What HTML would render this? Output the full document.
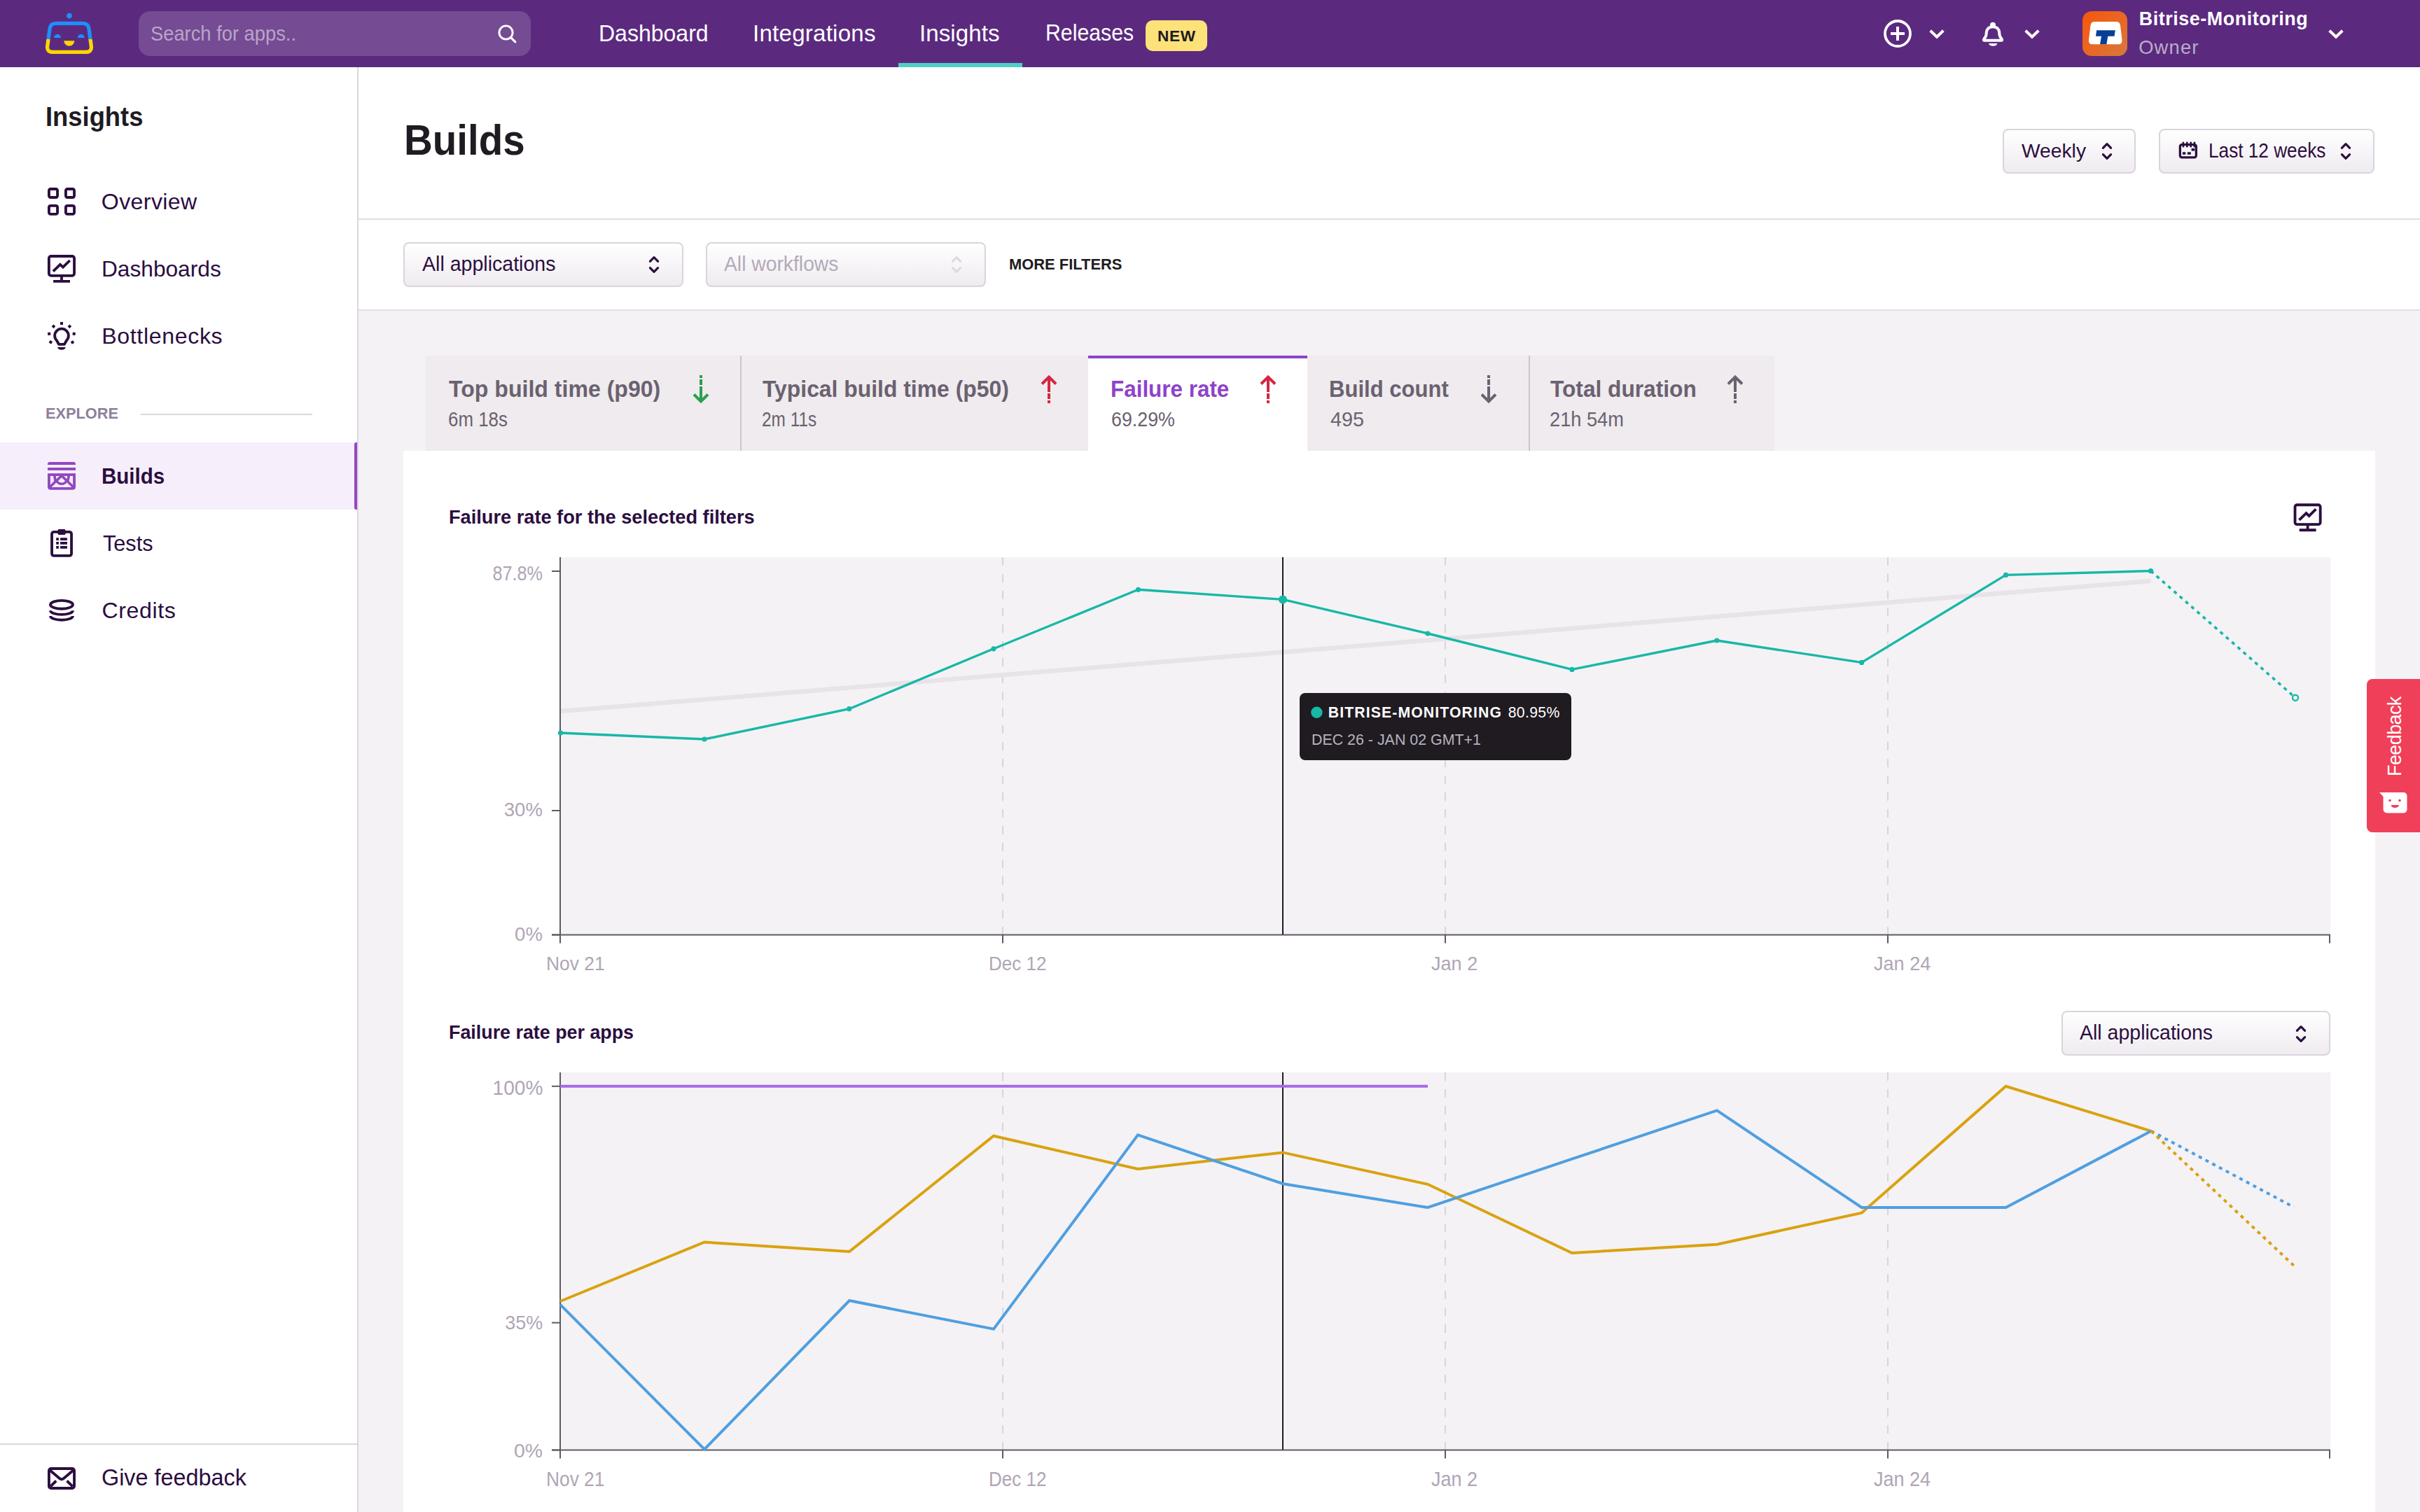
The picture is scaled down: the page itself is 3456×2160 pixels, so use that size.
<!DOCTYPE html>
<html><head><meta charset="utf-8"><title>Builds - Insights</title>
<style>
html,body{margin:0;padding:0;}
body{width:3456px;height:2160px;overflow:hidden;position:relative;background:#f4f2f5;font-family:"Liberation Sans",sans-serif;}
.r{position:absolute;display:block;}
.t{position:absolute;white-space:nowrap;}
@media (max-width:2400px){body{zoom:0.5;}}
</style></head><body>
<div class="r" style="left:0px;top:0px;width:3456px;height:96px;background:#5b2a7f;"></div>
<div class="r" style="left:0px;top:96px;width:510px;height:2064px;background:#fff;"></div>
<div class="r" style="left:510px;top:96px;width:2px;height:2064px;background:#dcd6df;"></div>
<div class="r" style="left:512px;top:96px;width:2944px;height:216px;background:#fff;"></div>
<div class="r" style="left:512px;top:312px;width:2944px;height:2px;background:#e2dde4;"></div>
<div class="r" style="left:512px;top:314px;width:2944px;height:126px;background:#fff;"></div>
<div class="r" style="left:512px;top:314px;width:2944px;height:128px;background:#fff;"></div>
<div class="r" style="left:512px;top:442px;width:2944px;height:2px;background:#e2dde4;"></div>
<div class="r" style="left:198px;top:16px;width:560px;height:64px;background:#754b93;border-radius:16px;"></div>
<svg class="r" style="left:700px;top:30px;" width="50" height="40" viewBox="700 30 50 40"><circle cx="722.5" cy="46.5" r="9.6" fill="none" stroke="#fff" stroke-width="2.9"/><path d="M729.8 53.8 L735.8 59.8" stroke="#fff" stroke-width="3.2" stroke-linecap="round"/></svg>
<div class="r" style="left:1283px;top:90px;width:177px;height:6px;background:#4fd0c4;"></div>
<div class="r" style="left:1636px;top:29px;width:88px;height:44px;background:#fde27a;border-radius:10px;"></div>
<svg class="r" style="left:56px;top:10px;" width="90" height="76" viewBox="56 10 90 76"><defs><clipPath id="ctop"><rect x="50" y="0" width="100" height="56"/></clipPath><clipPath id="cbot"><rect x="50" y="56" width="100" height="40"/></clipPath></defs><circle cx="99" cy="22.6" r="3.8" fill="#1e8fff"/><path id="lb" d="M80 33.3 L118 33.3 Q126 33.3 127 41 L130.3 66 Q131.5 74.4 122 74.4 L76 74.4 Q66.5 74.4 67.7 66 L71 41 Q72 33.3 80 33.3 Z" fill="none" stroke="#1e8fff" stroke-width="5.3" clip-path="url(#ctop)"/><path d="M80 33.3 L118 33.3 Q126 33.3 127 41 L130.3 66 Q131.5 74.4 122 74.4 L76 74.4 Q66.5 74.4 67.7 66 L71 41 Q72 33.3 80 33.3 Z" fill="none" stroke="#ffd600" stroke-width="5.3" clip-path="url(#cbot)"/><path d="M77 54 A5 5 0 0 1 87 54 Z" fill="#1e8fff"/><path d="M110.8 54 A5 5 0 0 1 120.8 54 Z" fill="#1e8fff"/><path d="M91.3 58.2 L106.3 58.2 A7.5 7.5 0 0 1 91.3 58.2 Z" fill="#ffd600"/></svg>
<svg class="r" style="left:2680px;top:20px;" width="240" height="56" viewBox="2680 20 240 56"><circle cx="2710" cy="48" r="18" fill="none" stroke="#fff" stroke-width="3.8"/><path d="M2700 48 H2720 M2710 38 V58" stroke="#fff" stroke-width="4"/><path d="M2756.7 43.7 L2766 52.7 L2775.3 43.7" fill="none" stroke="#fff" stroke-width="4"/><path d="M2892.7 43.7 L2902 52.7 L2911.3 43.7" fill="none" stroke="#fff" stroke-width="4"/><path d="M2846 38.2 C2840 38.2 2837 42 2836.7 47 L2836.5 50 Q2836 52.5 2833.5 55.3 Q2831.8 57.8 2834.5 57.8 L2857.5 57.8 Q2860.2 57.8 2858.5 55.3 Q2856 52.5 2855.5 50 L2855.3 47 C2855 42 2852 38.2 2846 38.2 Z" fill="none" stroke="#fff" stroke-width="4" stroke-linejoin="round"/><circle cx="2846" cy="35.8" r="4" fill="#fff"/><path d="M2840.2 61.9 H2852.3 A6.05 3.9 0 0 1 2840.2 61.9 Z" fill="#fff"/></svg>
<svg class="r" style="left:2966px;top:10px;" width="80" height="76" viewBox="2966 10 80 76"><defs><linearGradient id="ag" x1="0" y1="0" x2="1" y2="1"><stop offset="0" stop-color="#f8560c"/><stop offset="1" stop-color="#d8783c"/></linearGradient></defs><rect x="2974" y="16" width="64" height="64" rx="13" fill="url(#ag)"/><path d="M2991 31 L3022 31 Q3027 31 3028 36 L3030.5 57 Q3031 63.3 3025 63.3 L2988 63.3 Q2982.5 63.3 2983 57 L2985.5 36 Q2986.5 31 2991 31 Z" fill="#fff"/><path d="M2994.2 43.2 L3020.8 43.2 L3019.5 51.7 L3010.3 51.7 L3008.3 63.3 L2999 63.3 L3001 51.7 L2993 51.7 Z" fill="#073f96"/></svg>
<svg class="r" style="left:3315px;top:30px;" width="45" height="36" viewBox="3315 30 45 36"><path d="M3326.7 43.7 L3336 52.7 L3345.3 43.7" fill="none" stroke="#fff" stroke-width="4"/></svg>
<svg class="r" style="left:60px;top:260px;" width="56" height="52" viewBox="60 260 56 52"><rect x="69.95" y="269.95" width="12.1" height="12.05" rx="2.2" fill="none" stroke="#2b0e3f" stroke-width="3.85"/><rect x="69.95" y="293.8" width="12.1" height="12.05" rx="2.2" fill="none" stroke="#2b0e3f" stroke-width="3.85"/><rect x="93.95" y="269.95" width="12.1" height="12.05" rx="2.2" fill="none" stroke="#2b0e3f" stroke-width="3.85"/><rect x="93.95" y="293.8" width="12.1" height="12.05" rx="2.2" fill="none" stroke="#2b0e3f" stroke-width="3.85"/></svg>
<svg class="r" style="left:60px;top:355px;" width="56" height="55" viewBox="60 355 56 55"><rect x="69.9" y="365.95" width="36.15" height="27.9" rx="3" fill="none" stroke="#2b0e3f" stroke-width="3.85"/><path d="M88 394 V401 M76.1 401.95 H100" stroke="#2b0e3f" stroke-width="3.8"/><path d="M75.9 387.6 L85.9 377.8 L90 381.7 L99.8 372" fill="none" stroke="#2b0e3f" stroke-width="3.8"/></svg>
<svg class="r" style="left:60px;top:450px;" width="56" height="55" viewBox="60 450 56 55"><path d="M81.04 486.46 A9.85 9.85 0 1 1 94.96 486.46 L92 491.8 L84 491.8 Z" fill="none" stroke="#2b0e3f" stroke-width="3.85" stroke-linejoin="round"/><path d="M82.2 495.9 H93.7 A5.75 3.9 0 0 1 82.2 495.9 Z" fill="#2b0e3f"/><rect x="86" y="460" width="4" height="4" fill="#2b0e3f" transform="rotate(0 88 462)"/><rect x="74.5" y="464.3" width="4" height="4" fill="#2b0e3f" transform="rotate(45 76.5 466.3)"/><rect x="97.4" y="464.3" width="4" height="4" fill="#2b0e3f" transform="rotate(-45 99.4 466.3)"/><rect x="68.2" y="474.9" width="4" height="4" fill="#2b0e3f" transform="rotate(-10 70.2 476.9)"/><rect x="103.7" y="474.9" width="4" height="4" fill="#2b0e3f" transform="rotate(10 105.7 476.9)"/><rect x="70.4" y="486.7" width="4" height="4" fill="#2b0e3f" transform="rotate(30 72.4 488.7)"/><rect x="101.5" y="487" width="4" height="4" fill="#2b0e3f" transform="rotate(-30 103.5 489)"/></svg>
<div class="r" style="left:201px;top:591px;width:245px;height:2px;background:#dcd6df;"></div>
<div class="r" style="left:0px;top:632px;width:510px;height:95.5px;background:#f6effb;"></div>
<div class="r" style="left:506px;top:632px;width:4px;height:95.5px;background:#9247c2;border-radius:3px 0 0 3px;"></div>
<svg class="r" style="left:60px;top:650px;" width="56" height="60" viewBox="60 650 56 60"><path d="M68 663.9 V663 Q68 660 71 660 L105 660 Q108 660 108 663 V663.9 Z" fill="#9247c2"/><rect x="68" y="668" width="40" height="3.9" fill="#9247c2"/><path d="M69.95 678.05 H106.05 V695.5 Q106.05 697.85 103.5 697.85 H72.5 Q69.95 697.85 69.95 695.5 Z" fill="none" stroke="#9247c2" stroke-width="3.85"/><path d="M71.5 695.5 L88 679.6 L104.5 695.5 M77.8 679.6 L79 687 M98.2 679.6 L97 687" fill="none" stroke="#9247c2" stroke-width="3.6"/><path d="M80.8 686.8 A8 8 0 0 0 95.2 686.8" fill="none" stroke="#9247c2" stroke-width="3.4"/></svg>
<svg class="r" style="left:60px;top:745px;" width="56" height="60" viewBox="60 745 56 60"><rect x="74.05" y="759.85" width="28" height="34.1" rx="3" fill="none" stroke="#2b0e3f" stroke-width="3.85"/><path d="M81.1 760 L83.5 756 H92.6 L95 760 L92.6 763.9 H83.5 Z" fill="#2b0e3f"/><path d="M80.2 770.05 H83.9 M86.1 770.05 H95.9 M80.2 775.95 H83.9 M86.1 775.95 H95.9 M80.2 781.85 H83.9 M86.1 781.85 H95.9" stroke="#2b0e3f" stroke-width="3.7"/></svg>
<svg class="r" style="left:60px;top:845px;" width="56" height="50" viewBox="60 845 56 50"><ellipse cx="88" cy="863.85" rx="16" ry="5.9" fill="none" stroke="#2b0e3f" stroke-width="3.85"/><path d="M72 872.3 A16 5.6 0 0 0 104 872.3 M72 880 A16 5.7 0 0 0 104 880" fill="none" stroke="#2b0e3f" stroke-width="3.85"/></svg>
<div class="r" style="left:0px;top:2062px;width:510px;height:2px;background:#dcd6df;"></div>
<svg class="r" style="left:60px;top:2085px;" width="56" height="50" viewBox="60 2085 56 50"><rect x="69.95" y="2097.95" width="36.1" height="28" rx="3" fill="none" stroke="#2b0e3f" stroke-width="3.85"/><path d="M71.5 2100.5 L85 2112 Q88 2114.5 91 2112 L104.5 2100.5" fill="none" stroke="#2b0e3f" stroke-width="3.85"/><path d="M80.2 2115.5 L72.2 2123.3 M95.6 2115.5 L103.6 2123.3" fill="none" stroke="#2b0e3f" stroke-width="3.85"/></svg>
<div class="r" style="left:2860px;top:184px;width:190px;height:64px;background:linear-gradient(#ffffff,#efebf0);border:2px solid #dad4dc;border-radius:8px;box-sizing:border-box;"></div>
<div class="r" style="left:3083px;top:184px;width:308px;height:64px;background:linear-gradient(#ffffff,#efebf0);border:2px solid #dad4dc;border-radius:8px;box-sizing:border-box;"></div>
<div class="r" style="left:576px;top:346px;width:400px;height:64px;background:linear-gradient(#ffffff,#efebf0);border:2px solid #dad4dc;border-radius:8px;box-sizing:border-box;"></div>
<div class="r" style="left:1008px;top:346px;width:400px;height:64px;background:linear-gradient(#ffffff,#efebf0);border:2px solid #dad4dc;border-radius:8px;box-sizing:border-box;"></div>
<svg class="r" style="left:2997px;top:200px;" width="24" height="32" viewBox="2997 200 24 32"><path d="M3003.4 211.4 L3009 205.7 L3014.6 211.4 M3003.4 220.6 L3009 226.3 L3014.6 220.6" fill="none" stroke="#2b0e3f" stroke-width="3.2" stroke-linecap="round" stroke-linejoin="round"/></svg>
<svg class="r" style="left:3338px;top:200px;" width="24" height="32" viewBox="3338 200 24 32"><path d="M3344.4 211.4 L3350 205.7 L3355.6 211.4 M3344.4 220.6 L3350 226.3 L3355.6 220.6" fill="none" stroke="#2b0e3f" stroke-width="3.2" stroke-linecap="round" stroke-linejoin="round"/></svg>
<svg class="r" style="left:922px;top:362px;" width="24" height="32" viewBox="922 362 24 32"><path d="M928.4 373.4 L934 367.7 L939.6 373.4 M928.4 382.6 L934 388.3 L939.6 382.6" fill="none" stroke="#2b0e3f" stroke-width="3.2" stroke-linecap="round" stroke-linejoin="round"/></svg>
<svg class="r" style="left:1354.4px;top:362px;" width="24.0" height="32" viewBox="1354.4 362 24.0 32"><path d="M1360.8000000000002 373.4 L1366.4 367.7 L1372.0 373.4 M1360.8000000000002 382.6 L1366.4 388.3 L1372.0 382.6" fill="none" stroke="#dfd9e1" stroke-width="3.2" stroke-linecap="round" stroke-linejoin="round"/></svg>
<svg class="r" style="left:3105px;top:196px;" width="40" height="36" viewBox="3105 196 40 36"><rect x="3113.35" y="206.65" width="23" height="18.2" rx="2.5" fill="none" stroke="#2b0e3f" stroke-width="3.3"/><rect x="3116.6" y="202.7" width="2.6" height="7.7" fill="#2b0e3f"/><rect x="3122" y="202.7" width="2.6" height="7.7" fill="#2b0e3f"/><rect x="3127.4" y="202.7" width="2.6" height="7.7" fill="#2b0e3f"/><rect x="3132.6" y="202.7" width="2.6" height="7.7" fill="#2b0e3f"/><rect x="3116.9" y="217.3" width="4.4" height="3.5" fill="#2b0e3f"/><rect x="3123.8" y="217.3" width="5" height="3.5" fill="#2b0e3f"/><rect x="3129.6" y="212" width="4.6" height="3.6" fill="#2b0e3f"/></svg>
<div class="r" style="left:608px;top:508px;width:1926px;height:136px;background:#efebee;"></div>
<div class="r" style="left:1057px;top:508px;width:2px;height:136px;background:#cbc5ce;"></div>
<div class="r" style="left:2182.5px;top:508px;width:2.0px;height:136px;background:#cbc5ce;"></div>
<div class="r" style="left:1554px;top:508px;width:313px;height:136px;background:#fff;"></div>
<div class="r" style="left:1554px;top:508px;width:313px;height:4px;background:#8e44c8;"></div>
<svg class="r" style="left:987px;top:530px;" width="28" height="50" viewBox="987 530 28 50"><path d="M1001 536 V540 M1001 542 V550 M1001 552 V574" stroke="#2ba04d" stroke-width="4"/><path d="M991 563.5 L1001 573.5 L1011 563.5" fill="none" stroke="#2ba04d" stroke-width="4"/></svg>
<svg class="r" style="left:1483.5px;top:530px;" width="28.0" height="50" viewBox="1483.5 530 28.0 50"><path d="M1497.5 538 V560 M1497.5 562 V570 M1497.5 572 V576" stroke="#d5263f" stroke-width="4"/><path d="M1487.5 548.5 L1497.5 538.5 L1507.5 548.5" fill="none" stroke="#d5263f" stroke-width="4"/></svg>
<svg class="r" style="left:1796.5px;top:530px;" width="28.0" height="50" viewBox="1796.5 530 28.0 50"><path d="M1810.5 538 V560 M1810.5 562 V570 M1810.5 572 V576" stroke="#d5263f" stroke-width="4"/><path d="M1800.5 548.5 L1810.5 538.5 L1820.5 548.5" fill="none" stroke="#d5263f" stroke-width="4"/></svg>
<svg class="r" style="left:2111.5px;top:530px;" width="28.0" height="50" viewBox="2111.5 530 28.0 50"><path d="M2125.5 536 V540 M2125.5 542 V550 M2125.5 552 V574" stroke="#6b6170" stroke-width="4"/><path d="M2115.5 563.5 L2125.5 573.5 L2135.5 563.5" fill="none" stroke="#6b6170" stroke-width="4"/></svg>
<svg class="r" style="left:2464px;top:530px;" width="28" height="50" viewBox="2464 530 28 50"><path d="M2478 538 V560 M2478 562 V570 M2478 572 V576" stroke="#6b6170" stroke-width="4"/><path d="M2468 548.5 L2478 538.5 L2488 548.5" fill="none" stroke="#6b6170" stroke-width="4"/></svg>
<div class="r" style="left:576px;top:644px;width:2816px;height:1516px;background:#fff;"></div>
<svg class="r" style="left:3268px;top:712px;" width="56" height="54" viewBox="3268 712 56 54"><rect x="3277.5" y="721.25" width="36.15" height="27.9" rx="3" fill="none" stroke="#2b0e3f" stroke-width="3.85"/><path d="M3295.6 749.3 V756.3 M3283.7 757.25 H3307.6" stroke="#2b0e3f" stroke-width="3.8"/><path d="M3283.5 742.9 L3293.5 733.0999999999999 L3297.6 737.0 L3307.4 727.3" fill="none" stroke="#2b0e3f" stroke-width="3.8"/></svg>
<div class="r" style="left:2944px;top:1444px;width:384px;height:64px;background:linear-gradient(#ffffff,#efebf0);border:2px solid #dad4dc;border-radius:8px;box-sizing:border-box;"></div>
<svg class="r" style="left:3273.5px;top:1460.7px;" width="24.0" height="32.0" viewBox="3273.5 1460.7 24.0 32.0"><path d="M3279.9 1472.1000000000001 L3285.5 1466.4 L3291.1 1472.1000000000001 M3279.9 1481.3 L3285.5 1487.0 L3291.1 1481.3" fill="none" stroke="#2b0e3f" stroke-width="3.2" stroke-linecap="round" stroke-linejoin="round"/></svg>
<div class="r" style="left:801px;top:796px;width:2527px;height:539px;background:#f4f2f5;"></div>
<div class="r" style="left:801px;top:1532px;width:2527px;height:539px;background:#f4f2f5;"></div>
<svg class="r" style="left:700px;top:780px;" width="2700" height="1380" viewBox="700 780 2700 1380"><path d="M1432 796 V1335" stroke="#d9d5db" stroke-width="2" stroke-dasharray="12 12"/><path d="M1432 1532 V2071" stroke="#d9d5db" stroke-width="2" stroke-dasharray="12 12"/><path d="M2064 796 V1335" stroke="#d9d5db" stroke-width="2" stroke-dasharray="12 12"/><path d="M2064 1532 V2071" stroke="#d9d5db" stroke-width="2" stroke-dasharray="12 12"/><path d="M2696 796 V1335" stroke="#d9d5db" stroke-width="2" stroke-dasharray="12 12"/><path d="M2696 1532 V2071" stroke="#d9d5db" stroke-width="2" stroke-dasharray="12 12"/><path d="M801 1016 L3071.5 830" stroke="#e8e3e9" stroke-width="6.5"/><path d="M800 796 V1336.5" stroke="#5f5a63" stroke-width="2"/><path d="M788 1335.5 H3328" stroke="#5f5a63" stroke-width="2"/><path d="M788 816 H800" stroke="#5f5a63" stroke-width="2"/><path d="M788 1158 H800" stroke="#5f5a63" stroke-width="2"/><path d="M788 1335.5 H800" stroke="#5f5a63" stroke-width="2"/><path d="M800 1335.5 V1347.5" stroke="#5f5a63" stroke-width="2"/><path d="M1432 1335.5 V1347.5" stroke="#5f5a63" stroke-width="2"/><path d="M2064 1335.5 V1347.5" stroke="#5f5a63" stroke-width="2"/><path d="M2696 1335.5 V1347.5" stroke="#5f5a63" stroke-width="2"/><path d="M3327 1335.5 V1347.5" stroke="#5f5a63" stroke-width="2"/><path d="M800 1532 V2072.5" stroke="#5f5a63" stroke-width="2"/><path d="M788 2071.5 H3328" stroke="#5f5a63" stroke-width="2"/><path d="M788 1551.8 H800" stroke="#5f5a63" stroke-width="2"/><path d="M788 1889.6 H800" stroke="#5f5a63" stroke-width="2"/><path d="M788 2071.5 H800" stroke="#5f5a63" stroke-width="2"/><path d="M800 2071.5 V2083.5" stroke="#5f5a63" stroke-width="2"/><path d="M1432 2071.5 V2083.5" stroke="#5f5a63" stroke-width="2"/><path d="M2064 2071.5 V2083.5" stroke="#5f5a63" stroke-width="2"/><path d="M2696 2071.5 V2083.5" stroke="#5f5a63" stroke-width="2"/><path d="M3327 2071.5 V2083.5" stroke="#5f5a63" stroke-width="2"/><path d="M1832 796 V1335" stroke="#201b22" stroke-width="2"/><path d="M1832 1532 V2071" stroke="#201b22" stroke-width="2"/><polyline points="800.5,1047 1006,1056 1212.7,1012.7 1419,926.8 1625.5,842.3 1832,856.4 2039,905 2245,956.4 2451.8,915 2658.6,946.4 2864.5,821.4 3071.5,815.6" fill="none" stroke="#17b8a6" stroke-width="3.4" stroke-linejoin="round"/><path d="M3071.5 815.6 L3278 996.8" stroke="#17b8a6" stroke-width="3.6" stroke-dasharray="5 6"/><circle cx="800.5" cy="1047" r="3.6" fill="#17b8a6"/><circle cx="1006" cy="1056" r="3.6" fill="#17b8a6"/><circle cx="1212.7" cy="1012.7" r="3.6" fill="#17b8a6"/><circle cx="1419" cy="926.8" r="3.6" fill="#17b8a6"/><circle cx="1625.5" cy="842.3" r="3.6" fill="#17b8a6"/><circle cx="1832" cy="856.4" r="6" fill="#17b8a6"/><circle cx="2039" cy="905" r="3.6" fill="#17b8a6"/><circle cx="2245" cy="956.4" r="3.6" fill="#17b8a6"/><circle cx="2451.8" cy="915" r="3.6" fill="#17b8a6"/><circle cx="2658.6" cy="946.4" r="3.6" fill="#17b8a6"/><circle cx="2864.5" cy="821.4" r="3.6" fill="#17b8a6"/><circle cx="3071.5" cy="815.6" r="3.6" fill="#17b8a6"/><circle cx="3278" cy="996.8" r="4" fill="#fff" stroke="#17b8a6" stroke-width="2.4"/><path d="M800 1551.8 H2039" stroke="#a66ae3" stroke-width="4"/><polyline points="800,1859 1006,1774.5 1213,1788 1419,1622.7 1625,1670 1832,1646.4 2039,1691.8 2245,1790 2452,1777.7 2658.6,1732.7 2864.5,1551.8 3072,1615.8" fill="none" stroke="#d9a20f" stroke-width="4"/><polyline points="800,1863.6 1006,2070.5 1213,1858 1419,1898.6 1625,1621.4 1832,1691 2039,1725 2245,1655.7 2452,1586.4 2658.6,1725 2864.5,1725 3072,1615.8" fill="none" stroke="#4f9fe0" stroke-width="4"/><path d="M3072 1615.8 L3276 1724.6" stroke="#4f9fe0" stroke-width="4" stroke-dasharray="5 6"/><path d="M3072 1615.8 L3276 1808.2" stroke="#d9a20f" stroke-width="4" stroke-dasharray="5 6"/></svg>
<div class="r" style="left:1856px;top:990px;width:388px;height:95.5px;background:#1f1b21;border-radius:8px;"></div>
<svg class="r" style="left:1868px;top:1005px;" width="24" height="24" viewBox="1868 1005 24 24"><circle cx="1880.4" cy="1017.8" r="8.2" fill="#17b8a6"/></svg>
<div class="r" style="left:3380px;top:970px;width:90px;height:219px;background:#f03f58;border-radius:8px;"></div>
<svg class="r" style="left:3390px;top:1125px;" width="55" height="45" viewBox="3390 1125 55 45"><path d="M3398 1132 L3432 1132 Q3437.5 1132 3437.5 1137.5 L3437.5 1156 Q3437.5 1161.4 3432 1161.4 L3409.5 1161.4 Q3403.5 1161.4 3403.5 1156 L3403.5 1138 Z" fill="#fff"/><circle cx="3413" cy="1143.5" r="1.8" fill="#f03f58"/><circle cx="3427" cy="1143.5" r="1.8" fill="#f03f58"/><path d="M3414.5 1150 L3426 1150 A5.75 4 0 0 1 3414.5 1150 Z" fill="#f03f58"/></svg>
<div id="h_search" class="t" style="left:215.0px;top:32.8px;font-size:29.80px;line-height:29.80px;color:#b9a4c8;font-weight:400;letter-spacing:0.00px;transform:scaleX(0.9167);transform-origin:0 0;">Search for apps..</div>
<div id="h_dash" class="t" style="left:854.7px;top:31.0px;font-size:33.14px;line-height:33.14px;color:#fff;font-weight:400;letter-spacing:0.00px;transform:scaleX(0.9664);transform-origin:0 0;">Dashboard</div>
<div id="h_integ" class="t" style="left:1075.0px;top:31.0px;font-size:33.14px;line-height:33.14px;color:#fff;font-weight:400;letter-spacing:0.22px;">Integrations</div>
<div id="h_ins" class="t" style="left:1313.0px;top:31.0px;font-size:33.14px;line-height:33.14px;color:#fff;font-weight:400;letter-spacing:0.06px;">Insights</div>
<div id="h_rel" class="t" style="left:1493.0px;top:31.3px;font-size:32.85px;line-height:32.85px;color:#fff;font-weight:400;letter-spacing:0.00px;transform:scaleX(0.9223);transform-origin:0 0;">Releases</div>
<div id="h_new" class="t" style="left:1653.0px;top:40.0px;font-size:22.67px;line-height:22.67px;color:#201b22;font-weight:700;letter-spacing:0.66px;">NEW</div>
<div id="h_org" class="t" style="left:3054.7px;top:13.8px;font-size:26.89px;line-height:26.89px;color:#fff;font-weight:700;letter-spacing:0.56px;">Bitrise-Monitoring</div>
<div id="h_owner" class="t" style="left:3054.2px;top:53.5px;font-size:27.33px;line-height:27.33px;color:#bcadc6;font-weight:400;letter-spacing:1.18px;">Owner</div>
<div id="s_title" class="t" style="left:65.1px;top:148.3px;font-size:38.52px;line-height:38.52px;color:#201b22;font-weight:700;letter-spacing:0.00px;transform:scaleX(0.9443);transform-origin:0 0;">Insights</div>
<div id="s_over" class="t" style="left:144.8px;top:271.6px;font-size:32.12px;line-height:32.12px;color:#2b0e3f;font-weight:400;letter-spacing:0.38px;">Overview</div>
<div id="s_dash" class="t" style="left:145.2px;top:367.6px;font-size:32.12px;line-height:32.12px;color:#2b0e3f;font-weight:400;letter-spacing:0.00px;transform:scaleX(0.9860);transform-origin:0 0;">Dashboards</div>
<div id="s_bott" class="t" style="left:145.2px;top:463.6px;font-size:32.12px;line-height:32.12px;color:#2b0e3f;font-weight:400;letter-spacing:0.65px;">Bottlenecks</div>
<div id="s_expl" class="t" style="left:65.1px;top:580.1px;font-size:22.09px;line-height:22.09px;color:#8e7f9a;font-weight:700;letter-spacing:0.00px;transform:scaleX(0.9857);transform-origin:0 0;">EXPLORE</div>
<div id="s_builds" class="t" style="left:144.7px;top:663.6px;font-size:32.12px;line-height:32.12px;color:#2b0e3f;font-weight:700;letter-spacing:0.00px;transform:scaleX(0.9196);transform-origin:0 0;">Builds</div>
<div id="s_tests" class="t" style="left:146.5px;top:759.6px;font-size:32.12px;line-height:32.12px;color:#2b0e3f;font-weight:400;letter-spacing:0.00px;transform:scaleX(0.9542);transform-origin:0 0;">Tests</div>
<div id="s_cred" class="t" style="left:145.5px;top:855.6px;font-size:32.12px;line-height:32.12px;color:#2b0e3f;font-weight:400;letter-spacing:0.59px;">Credits</div>
<div id="s_give" class="t" style="left:145.0px;top:2095.3px;font-size:32.41px;line-height:32.41px;color:#2b0e3f;font-weight:400;letter-spacing:0.00px;transform:scaleX(0.9983);transform-origin:0 0;">Give feedback</div>
<div id="p_title" class="t" style="left:577.1px;top:169.5px;font-size:60.47px;line-height:60.47px;color:#201b22;font-weight:700;letter-spacing:0.00px;transform:scaleX(0.9350);transform-origin:0 0;">Builds</div>
<div id="p_weekly" class="t" style="left:2886.9px;top:201.0px;font-size:28.20px;line-height:28.20px;color:#2b0e3f;font-weight:400;letter-spacing:0.04px;">Weekly</div>
<div id="p_last" class="t" style="left:3153.5px;top:200.5px;font-size:28.92px;line-height:28.92px;color:#2b0e3f;font-weight:400;letter-spacing:0.00px;transform:scaleX(0.9060);transform-origin:0 0;">Last 12 weeks</div>
<div id="f_app" class="t" style="left:603.0px;top:363.0px;font-size:28.92px;line-height:28.92px;color:#2b0e3f;font-weight:400;letter-spacing:0.00px;transform:scaleX(0.9877);transform-origin:0 0;">All applications</div>
<div id="f_wf" class="t" style="left:1034.0px;top:363.0px;font-size:28.92px;line-height:28.92px;color:#b3aab8;font-weight:400;letter-spacing:0.00px;transform:scaleX(0.9784);transform-origin:0 0;">All workflows</div>
<div id="f_more" class="t" style="left:1441.0px;top:365.6px;font-size:22.82px;line-height:22.82px;color:#201b22;font-weight:700;letter-spacing:0.00px;transform:scaleX(0.9604);transform-origin:0 0;">MORE FILTERS</div>
<div id="tb1" class="t" style="left:641.0px;top:539.6px;font-size:32.41px;line-height:32.41px;color:#6b6170;font-weight:700;letter-spacing:0.00px;transform:scaleX(0.9897);transform-origin:0 0;">Top build time (p90)</div>
<div id="tv1" class="t" style="left:640.0px;top:584.5px;font-size:28.78px;line-height:28.78px;color:#6b6170;font-weight:400;letter-spacing:0.00px;transform:scaleX(0.8994);transform-origin:0 0;">6m 18s</div>
<div id="tb2" class="t" style="left:1089.0px;top:539.6px;font-size:32.41px;line-height:32.41px;color:#6b6170;font-weight:700;letter-spacing:0.00px;transform:scaleX(0.9834);transform-origin:0 0;">Typical build time (p50)</div>
<div id="tv2" class="t" style="left:1088.0px;top:584.5px;font-size:28.78px;line-height:28.78px;color:#6b6170;font-weight:400;letter-spacing:0.00px;transform:scaleX(0.8479);transform-origin:0 0;">2m 11s</div>
<div id="tb3" class="t" style="left:1585.6px;top:539.6px;font-size:32.41px;line-height:32.41px;color:#8f43c9;font-weight:700;letter-spacing:0.00px;transform:scaleX(0.9692);transform-origin:0 0;">Failure rate</div>
<div id="tv3" class="t" style="left:1586.6px;top:584.5px;font-size:28.78px;line-height:28.78px;color:#6b6170;font-weight:400;letter-spacing:0.00px;transform:scaleX(0.9314);transform-origin:0 0;">69.29%</div>
<div id="tb4" class="t" style="left:1898.0px;top:539.6px;font-size:32.41px;line-height:32.41px;color:#6b6170;font-weight:700;letter-spacing:0.00px;transform:scaleX(0.9580);transform-origin:0 0;">Build count</div>
<div id="tv4" class="t" style="left:1900.0px;top:584.5px;font-size:28.78px;line-height:28.78px;color:#6b6170;font-weight:400;letter-spacing:0.00px;">495</div>
<div id="tb5" class="t" style="left:2214.0px;top:539.6px;font-size:32.41px;line-height:32.41px;color:#6b6170;font-weight:700;letter-spacing:0.00px;transform:scaleX(0.9772);transform-origin:0 0;">Total duration</div>
<div id="tv5" class="t" style="left:2213.0px;top:584.5px;font-size:28.78px;line-height:28.78px;color:#6b6170;font-weight:400;letter-spacing:0.00px;transform:scaleX(0.9456);transform-origin:0 0;">21h 54m</div>
<div id="c1_title" class="t" style="left:641.4px;top:725.3px;font-size:27.62px;line-height:27.62px;color:#2b0e3f;font-weight:700;letter-spacing:0.00px;transform:scaleX(0.9847);transform-origin:0 0;">Failure rate for the selected filters</div>
<div id="c2_title" class="t" style="left:641.0px;top:1461.1px;font-size:27.91px;line-height:27.91px;color:#2b0e3f;font-weight:700;letter-spacing:0.00px;transform:scaleX(0.9619);transform-origin:0 0;">Failure rate per apps</div>
<div id="c2_sel" class="t" style="left:2970.4px;top:1461.4px;font-size:29.07px;line-height:29.07px;color:#2b0e3f;font-weight:400;letter-spacing:0.00px;transform:scaleX(0.9807);transform-origin:0 0;">All applications</div>
<div id="y1a" class="t" style="right:2681.2px;top:804.5px;font-size:28.92px;line-height:28.92px;color:#b0a5b6;font-weight:400;transform:scaleX(0.8709);transform-origin:100% 0;">87.8%</div>
<div id="y1b" class="t" style="right:2681.2px;top:1143.3px;font-size:27.47px;line-height:27.47px;color:#b0a5b6;font-weight:400;">30%</div>
<div id="y1c" class="t" style="right:2681.2px;top:1321.3px;font-size:27.47px;line-height:27.47px;color:#b0a5b6;font-weight:400;">0%</div>
<div id="y2a" class="t" style="right:2681.0px;top:1540.4px;font-size:29.07px;line-height:29.07px;color:#b0a5b6;font-weight:400;transform:scaleX(0.9652);transform-origin:100% 0;">100%</div>
<div id="y2b" class="t" style="right:2681.0px;top:1874.9px;font-size:28.49px;line-height:28.49px;color:#b0a5b6;font-weight:400;transform:scaleX(0.9428);transform-origin:100% 0;">35%</div>
<div id="y2c" class="t" style="right:2681.0px;top:2057.5px;font-size:28.34px;line-height:28.34px;color:#b0a5b6;font-weight:400;">0%</div>
<div id="x1_0" class="t" style="left:779.5px;top:1363.4px;font-size:27.47px;line-height:27.47px;color:#b0a5b6;font-weight:400;letter-spacing:0.00px;transform:scaleX(0.9611);transform-origin:0 0;">Nov 21</div>
<div id="x2_0" class="t" style="left:779.5px;top:2099.0px;font-size:29.07px;line-height:29.07px;color:#b0a5b6;font-weight:400;letter-spacing:0.00px;transform:scaleX(0.9053);transform-origin:0 0;">Nov 21</div>
<div id="x1_1" class="t" style="left:1412.0px;top:1363.4px;font-size:27.47px;line-height:27.47px;color:#b0a5b6;font-weight:400;letter-spacing:0.00px;transform:scaleX(0.9492);transform-origin:0 0;">Dec 12</div>
<div id="x2_1" class="t" style="left:1412.0px;top:2099.0px;font-size:29.07px;line-height:29.07px;color:#b0a5b6;font-weight:400;letter-spacing:0.00px;transform:scaleX(0.8941);transform-origin:0 0;">Dec 12</div>
<div id="x1_2" class="t" style="left:2044.0px;top:1363.4px;font-size:27.47px;line-height:27.47px;color:#b0a5b6;font-weight:400;letter-spacing:0.00px;transform:scaleX(0.9860);transform-origin:0 0;">Jan 2</div>
<div id="x2_2" class="t" style="left:2044.0px;top:2099.0px;font-size:29.07px;line-height:29.07px;color:#b0a5b6;font-weight:400;letter-spacing:0.00px;transform:scaleX(0.9295);transform-origin:0 0;">Jan 2</div>
<div id="x1_3" class="t" style="left:2676.0px;top:1363.4px;font-size:27.47px;line-height:27.47px;color:#b0a5b6;font-weight:400;letter-spacing:0.00px;transform:scaleX(0.9854);transform-origin:0 0;">Jan 24</div>
<div id="x2_3" class="t" style="left:2676.0px;top:2099.0px;font-size:29.07px;line-height:29.07px;color:#b0a5b6;font-weight:400;letter-spacing:0.00px;transform:scaleX(0.9300);transform-origin:0 0;">Jan 24</div>
<div id="tt1" class="t" style="left:1896.7px;top:1006.8px;font-size:21.22px;line-height:21.22px;color:#fff;font-weight:700;letter-spacing:1.12px;">BITRISE-MONITORING</div>
<div id="tt2" class="t" style="left:2153.7px;top:1006.8px;font-size:21.22px;line-height:21.22px;color:#fff;font-weight:400;letter-spacing:0.34px;">80.95%</div>
<div id="tt3" class="t" style="left:1873.4px;top:1046.5px;font-size:21.51px;line-height:21.51px;color:#b9b1bd;font-weight:400;letter-spacing:0.00px;transform:scaleX(0.9951);transform-origin:0 0;">DEC 26 - JAN 02 GMT+1</div>
<div id="fb" class="t" style="left:3429.7px;top:1108.6px;font-size:27px;line-height:27px;color:#fff;transform-origin:0 0;transform:rotate(-90deg) translate(0,-22.9px);letter-spacing:-0.6px;">Feedback</div>
</body></html>
